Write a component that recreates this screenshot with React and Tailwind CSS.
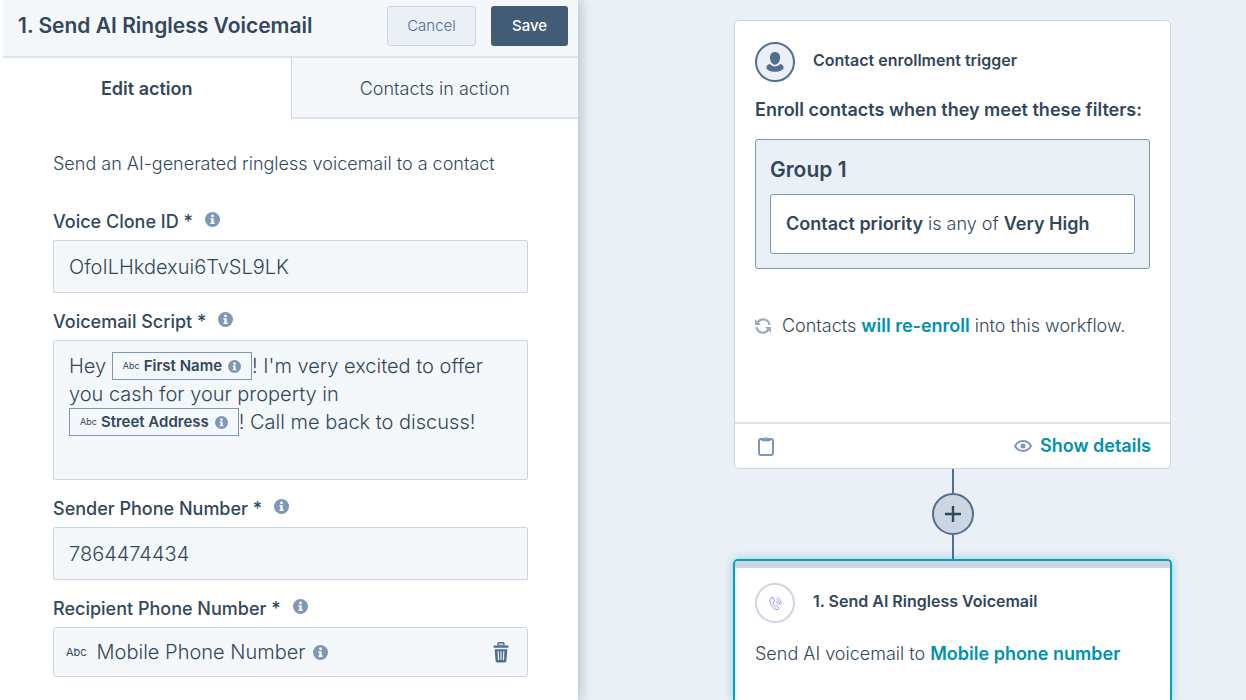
const INK = "text-[#33475b]";

function InfoIcon({ className = "size-[15px]" }) {
  return (
    <svg viewBox="0 0 16 16" className={`shrink-0 ${className}`} aria-hidden="true">
      <circle cx="8" cy="8" r="8" fill="#7c98b6" />
      <circle cx="8" cy="4.2" r="1.5" fill="#fff" />
      <path d="M5.8 6.7h3.5v4.4h1v1.6H5.8v-1.6h1V8.3h-1z" fill="#fff" />
    </svg>
  );
}

function TrashIcon() {
  return (
    <svg viewBox="0 0 16 21" className="h-[21px] w-4" aria-hidden="true">
      <path
        d="M5 4V1.8C5 1 5.5.6 6.2.6h3.6c.7 0 1.2.4 1.2 1.2V4"
        fill="#b4c4d6"
        stroke="#516f90"
        strokeWidth="1.3"
      />
      <rect x="0.5" y="3.6" width="15" height="2.2" rx="0.6" fill="#516f90" />
      <path d="M1.6 7.2h12.8l-1 11.9c-.1.9-.7 1.4-1.6 1.4H4.2c-.9 0-1.5-.5-1.6-1.4z" fill="#516f90" />
      <path d="M5.2 9.3l.4 8.8M8 9.3v8.8M10.8 9.3l-.4 8.8" stroke="#e5edf5" strokeWidth="1.2" />
    </svg>
  );
}

function PersonIcon() {
  return (
    <svg viewBox="0 0 18 20" className="h-5 w-[18px]" aria-hidden="true">
      <path d="M9 0c3.1 0 5.1 2.2 5.1 5.6 0 3.6-2.2 7.2-5.1 7.2S3.9 9.2 3.9 5.6C3.9 2.2 5.9 0 9 0z" fill="#516f90" />
      <path
        d="M3.8 12.1C1.7 12.7.4 13.9.4 15.4.4 17.9 4.3 19.7 9 19.7s8.6-1.8 8.6-4.3c0-1.5-1.3-2.7-3.4-3.3-1.3 1.6-3.1 2.5-5.2 2.5s-3.9-.9-5.2-2.5z"
        fill="#516f90"
      />
    </svg>
  );
}

function RefreshIcon() {
  return (
    <svg viewBox="0 0 16 16" className="size-4 shrink-0" fill="none" aria-hidden="true">
      <path d="M2.6 4.6A6.4 6.4 0 0 1 14.5 7M13.4 11.4A6.4 6.4 0 0 1 1.5 9" stroke="#99acc2" strokeWidth="2.2" />
      <path d="M0 1v6h6zM16 15V9h-6z" fill="#99acc2" />
    </svg>
  );
}

function ClipboardIcon() {
  return (
    <svg viewBox="0 0 16 20" className="h-5 w-4" fill="none" aria-hidden="true">
      <rect x="1" y="3" width="14" height="16" rx="2" stroke="#7c98b6" strokeWidth="2" />
      <path d="M3.5 5.2V2.8h2.7a1.8 1.8 0 0 1 3.6 0h2.7v2.4z" fill="#7c98b6" />
      <circle cx="8" cy="2.4" r="0.6" fill="#fff" />
    </svg>
  );
}

function EyeIcon() {
  return (
    <svg viewBox="0 0 18 12" className="h-3 w-[18px]" fill="none" aria-hidden="true">
      <path
        d="M1 6c1.7-3 4.6-4.9 8-4.9S15.3 3 17 6c-1.7 3-4.6 4.9-8 4.9S2.7 9 1 6z"
        stroke="#7c98b6"
        strokeWidth="2"
      />
      <circle cx="9" cy="6" r="2.5" fill="#7c98b6" />
    </svg>
  );
}

function CallIcon() {
  return (
    <svg viewBox="0 0 14 16" className="h-[15px] w-[13px]" fill="none" stroke="#8f7fd6" strokeLinecap="round" aria-hidden="true">
      <path
        d="M3.3 1.6C1.3 2.3.7 4.5 1.4 7.2c.9 3.6 3.6 6.7 6.3 7.3 1.5.3 2.7-.3 3.1-1.5l-2.6-2.6-1.5.9C5.4 10.3 4.5 8.6 4.3 6.9l1.5-.8-.7-3.9c-.5-.6-1.1-.8-1.8-.6z"
        strokeWidth="0.9"
      />
      <path d="M7.6 5.6c1 .6 1.6 1.7 1.5 3M8.4 3.6c1.8.9 2.8 2.8 2.6 5.2M9.2 1.5c2.6 1.3 4 4 3.6 7.5" strokeWidth="0.8" />
    </svg>
  );
}

function FieldLabel({ id, htmlFor, children }) {
  return (
    <div className="mb-1.5 flex h-[25px] items-end gap-3">
      <label id={id} htmlFor={htmlFor} className="text-lg leading-6 font-medium">
        {children} *
      </label>
      <InfoIcon className="mb-[7px] size-[15px]" />
    </div>
  );
}

function TextField({ id, label, value }) {
  return (
    <div>
      <FieldLabel htmlFor={id}>{label}</FieldLabel>
      <input
        id={id}
        type="text"
        defaultValue={value}
        className="h-[53px] w-full rounded-xs border border-[#cbd6e2] bg-[#f5f8fa] px-[15px] text-xl font-light outline-none"
      />
    </div>
  );
}

function Token({ children }) {
  return (
    <span
      contentEditable={false}
      className="-my-0.5 inline-flex h-7 items-center border border-[#7c98b6] px-2.5 align-text-bottom text-[15px] font-semibold"
    >
      <span className="mr-1 text-[9px] font-normal">Abc</span>
      {children}
      <InfoIcon className="ml-1.5 size-[13px]" />
    </span>
  );
}

function EditPanel() {
  return (
    <aside className="relative z-10 bg-white pl-[3px] shadow-[2px_0_12px_rgba(51,71,91,0.3)]">
      <header className="flex h-[58px] items-center gap-[15px] border-b-2 border-[#dfe3eb] bg-[#f5f8fa] pr-2.5 pb-1 pl-[15px]">
        <h1 className="mr-auto text-[21px] font-semibold whitespace-nowrap">1. Send AI Ringless Voicemail</h1>
        <button className="h-10 w-[89px] rounded-[3px] border border-[#cbd6e2] bg-[#eaf0f6] text-[15px] font-light text-[#506e91]">
          Cancel
        </button>
        <button className="h-10 w-[77px] rounded-[3px] bg-[#425b76] text-[15px] font-medium text-white">Save</button>
      </header>

      <div role="tablist" className="grid h-[61px] grid-cols-2 text-lg">
        <button role="tab" aria-selected="true" className="font-semibold">
          Edit action
        </button>
        <button
          role="tab"
          aria-selected="false"
          className="border-b-2 border-l border-b-[#dfe3eb] border-l-[#cbd6e2] bg-[#f5f8fa] pt-0.5 font-light"
        >
          Contacts in action
        </button>
      </div>

      <form className="flex flex-col gap-4 px-[50px] pt-[33px]">
        <p className="mb-[17px] text-lg leading-6 font-light whitespace-nowrap">
          Send an AI-generated ringless voicemail to a contact
        </p>

        <TextField id="voice-clone" label="Voice Clone ID" value="OfoILHkdexui6TvSL9LK" />

        <div>
          <FieldLabel id="script-label">Voicemail Script</FieldLabel>
          <div
            role="textbox"
            aria-multiline="true"
            aria-labelledby="script-label"
            contentEditable
            suppressContentEditableWarning
            className="min-h-[140px] rounded-xs border border-[#cbd6e2] bg-[#f5f8fa] px-[15px] py-[11px] text-xl leading-7 font-light outline-none"
          >
            Hey <Token>First Name</Token>! I'm very excited to offer
            <br />
            you cash for your property in
            <br />
            <Token>Street Address</Token>! Call me back to discuss!
          </div>
        </div>

        <TextField id="sender-phone" label="Sender Phone Number" value="7864474434" />

        <div>
          <FieldLabel id="recipient-label">Recipient Phone Number</FieldLabel>
          <div
            role="group"
            aria-labelledby="recipient-label"
            className="flex h-[50px] items-center rounded-[3px] border border-[#cbd6e2] bg-[#f5f8fa] pr-[18px] pl-3"
          >
            <span className="mr-2.5 text-[11px]">Abc</span>
            <span className="text-xl font-light">Mobile Phone Number</span>
            <InfoIcon className="ml-2 size-[15px]" />
            <button type="button" aria-label="Delete" className="ml-auto">
              <TrashIcon />
            </button>
          </div>
        </div>
      </form>
    </aside>
  );
}

function TriggerCard() {
  return (
    <section className="flex min-h-[449px] flex-col rounded-[5px] border border-[#cbd6e2] bg-white">
      <div className="flex grow flex-col px-5 pt-[21px]">
        <div className="flex items-center gap-[18px]">
          <span className="flex size-10 items-center justify-center rounded-full border-2 border-[#516f90] bg-[#eaf0f6]">
            <PersonIcon />
          </span>
          <h2 className="pb-1 text-base font-semibold">Contact enrollment trigger</h2>
        </div>
        <p className="mt-4 text-lg leading-6 font-semibold whitespace-nowrap">
          Enroll contacts when they meet these filters:
        </p>
        <div className="mt-[17px] rounded-[3px] border border-[#7c98b6] bg-[#eaf0f6] p-3.5">
          <h3 className="mt-1 text-[21px] leading-6 font-semibold">Group 1</h3>
          <p className="mt-3 flex h-[60px] items-center rounded-[3px] border border-[#7c98b6] bg-white px-[15px] text-lg font-light">
            <span>
              <b className="font-semibold">Contact priority</b> is any of <b className="font-semibold">Very High</b>
            </span>
          </p>
        </div>
        <p className="mt-[45px] flex items-center gap-[11px] text-lg leading-6 font-light">
          <RefreshIcon />
          <span>
            Contacts{" "}
            <a href="#" className="font-semibold text-[#0091ae]">
              will re-enroll
            </a>{" "}
            into this workflow.
          </span>
        </p>
      </div>
      <footer className="flex h-[46px] items-center justify-between border-t-2 border-[#dfe3eb] pr-[19px] pl-[23px]">
        <button aria-label="Copy">
          <ClipboardIcon />
        </button>
        <button className="flex items-center gap-2 text-lg font-semibold text-[#0091ae]">
          <EyeIcon />
          Show details
        </button>
      </footer>
    </section>
  );
}

function Connector() {
  return (
    <div className="flex flex-col items-center">
      <span className="h-6 w-0.5 bg-[#516f90]" />
      <button
        aria-label="Add action"
        className="flex size-[42px] items-center justify-center rounded-full border-2 border-[#516f90] bg-[#cbd6e2]"
      >
        <svg viewBox="0 0 16 16" className="size-4" aria-hidden="true">
          <path d="M8 0v16M0 8h16" stroke="#33475b" strokeWidth="2.4" />
        </svg>
      </button>
      <span className="h-6 w-0.5 bg-[#516f90]" />
    </div>
  );
}

function ActionCard() {
  return (
    <section className="-mx-px grow rounded-t-[5px] border-2 border-b-0 border-[#00a4bd] bg-white shadow-[0_0_10px_rgba(0,164,189,0.4)]">
      <div className="h-[7px] rounded-t-[3px] bg-[#cbd6e2]" />
      <div className="px-5 pt-[15px]">
        <div className="flex items-center gap-[18px]">
          <span className="flex size-10 items-center justify-center rounded-full border-2 border-[#cbd6e2]">
            <CallIcon />
          </span>
          <h2 className="pb-1 text-base font-semibold">1. Send AI Ringless Voicemail</h2>
        </div>
        <p className="mt-[19px] text-lg leading-6 font-light whitespace-nowrap">
          Send AI voicemail to{" "}
          <a href="#" className="font-semibold text-[#0091ae]">
            Mobile phone number
          </a>
        </p>
      </div>
    </section>
  );
}

export default function App() {
  return (
    <div className={`grid h-screen grid-cols-[578fr_668fr] overflow-hidden bg-[#eaf0f6] font-[Inter,sans-serif] ${INK}`}>
      <EditPanel />
      <main className="flex flex-col pt-5 pr-[75px] pl-[156px]">
        <TriggerCard />
        <Connector />
        <ActionCard />
      </main>
    </div>
  );
}
